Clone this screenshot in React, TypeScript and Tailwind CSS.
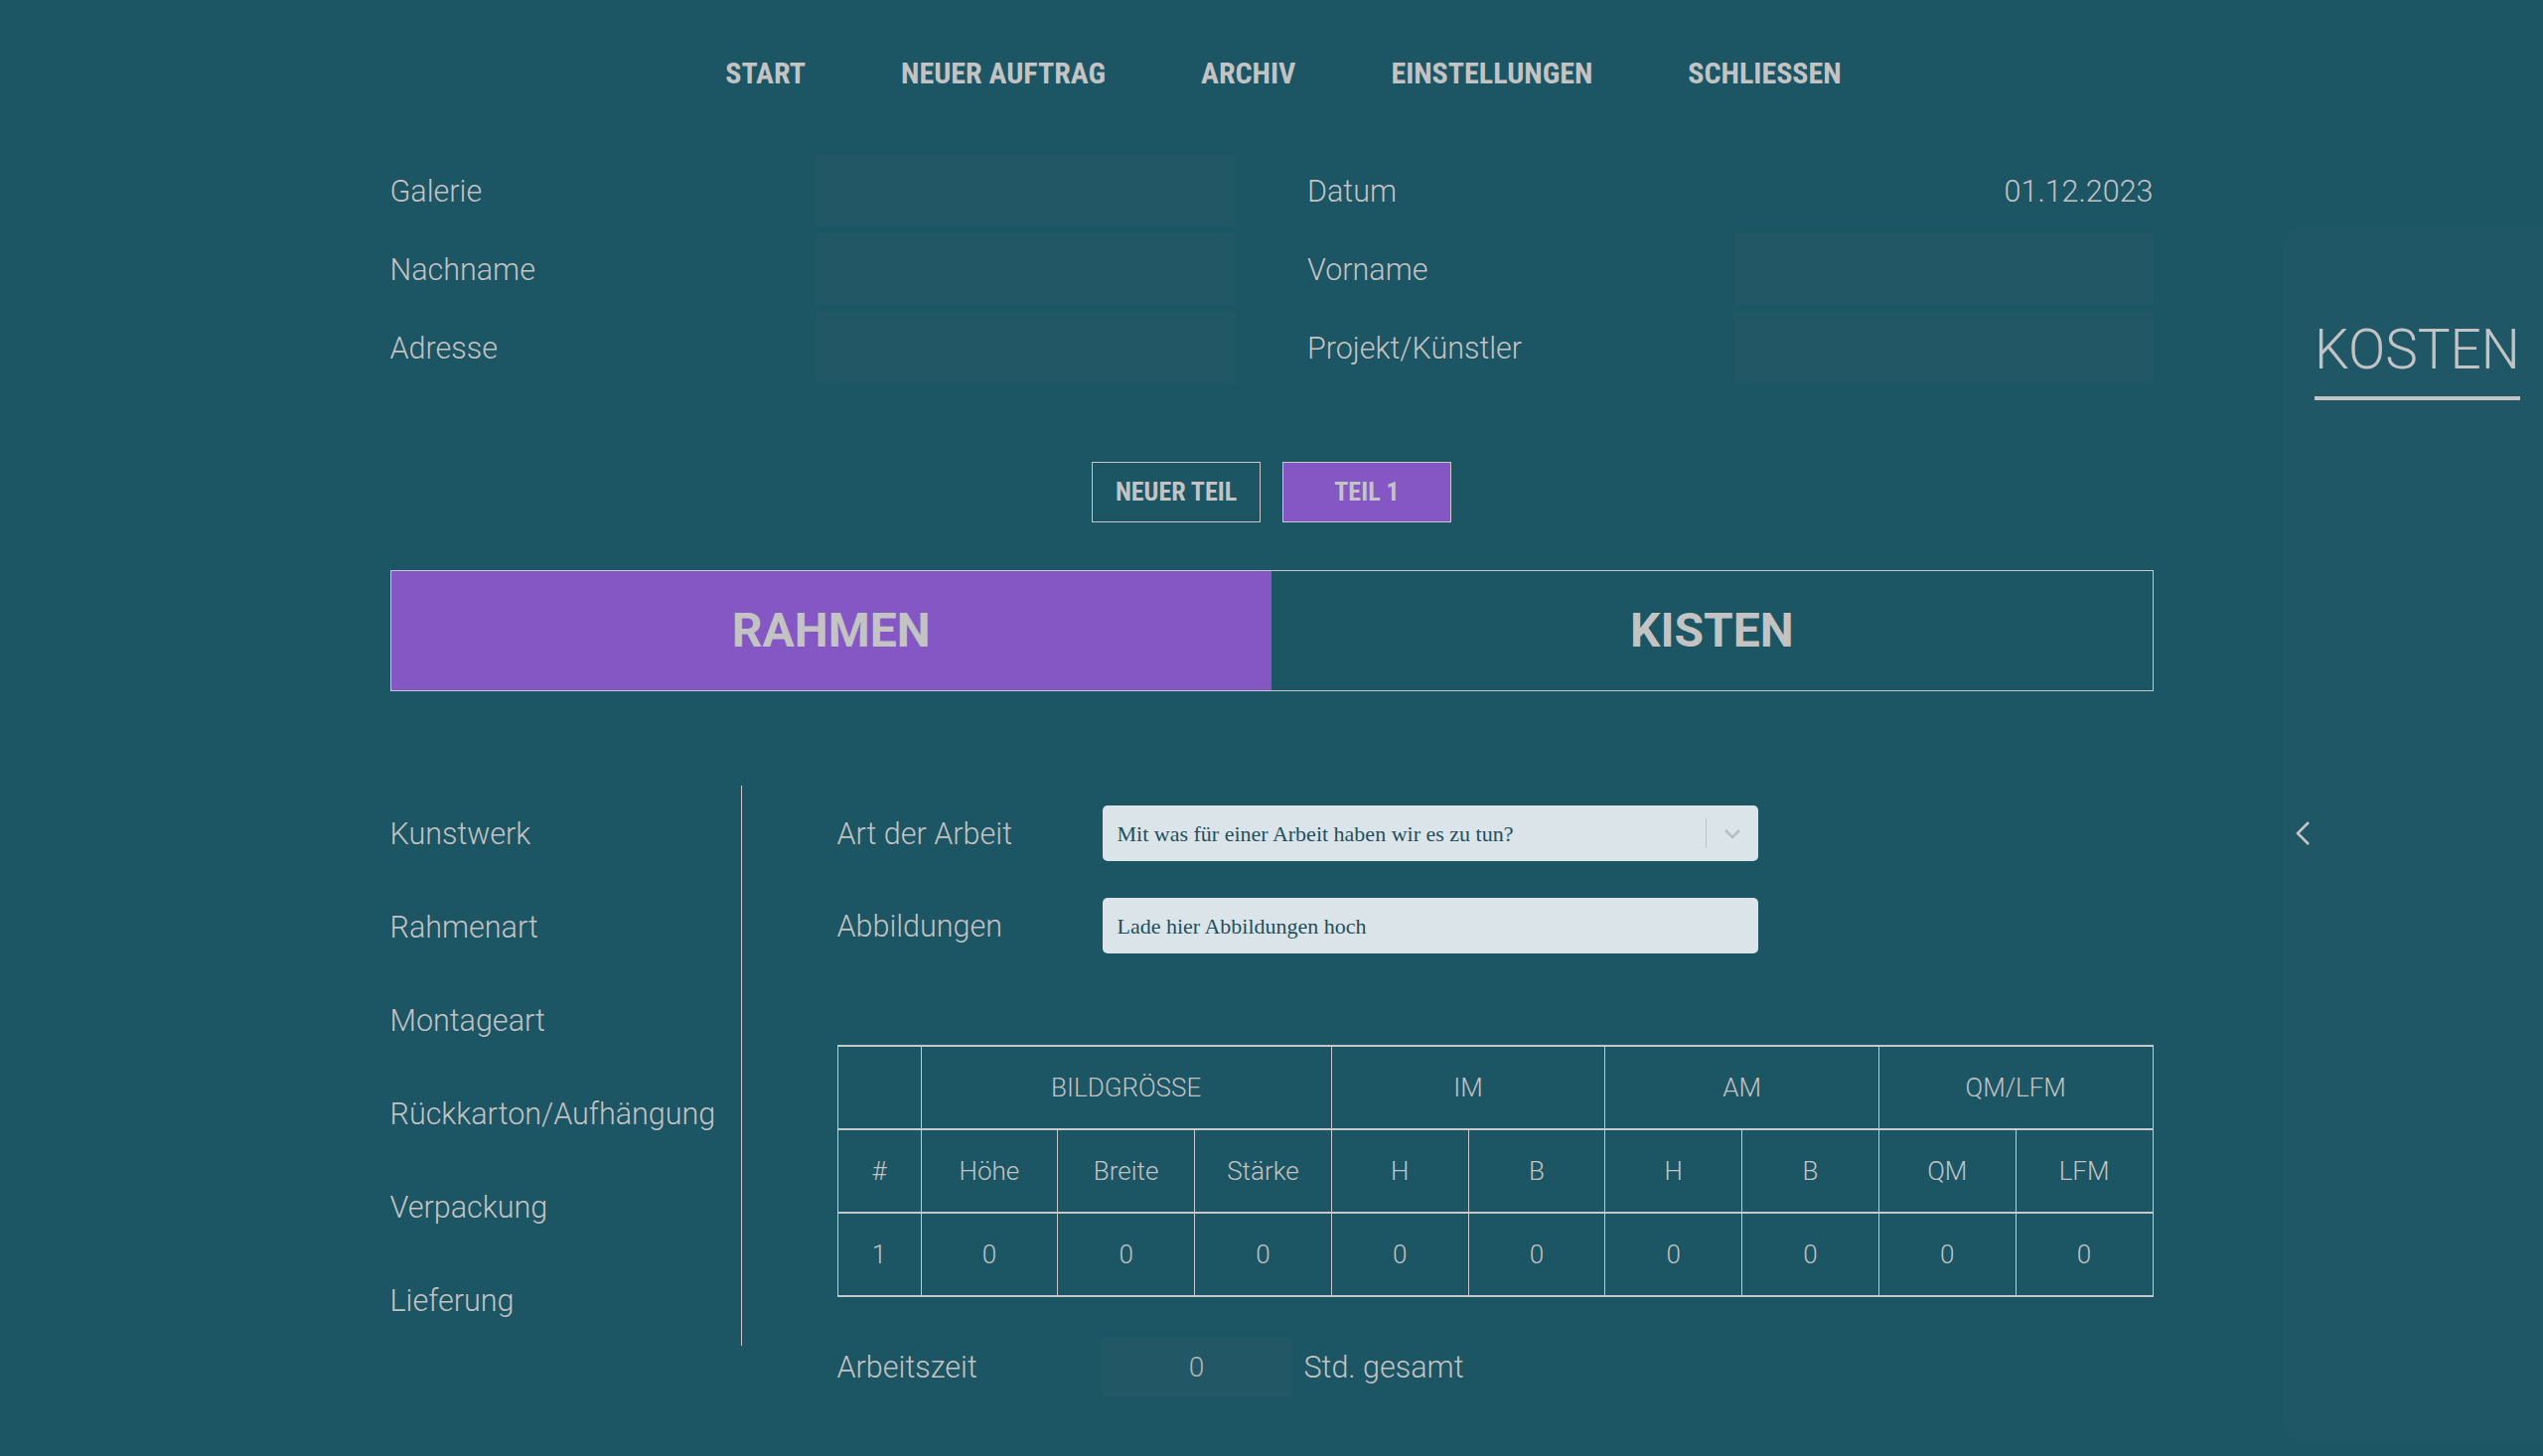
import React from "react";

const fields = [
  { label: "Galerie", box: true },
  { label: "Datum", value: "01.12.2023" },
  { label: "Nachname", box: true },
  { label: "Vorname", box: true },
  { label: "Adresse", box: true },
  { label: "Projekt/Künstler", box: true },
];

const menu = ["Kunstwerk", "Rahmenart", "Montageart", "Rückkarton/Aufhängung", "Verpackung", "Lieferung"];
const subCols = ["#", "Höhe", "Breite", "Stärke", "H", "B", "H", "B", "QM", "LFM"];

const cell = "border-x border-y-2 border-[#c8c8c8] text-center font-light text-[26px] h-[84px] p-0";

export default function App() {
  return (
    <div className="relative min-h-screen overflow-hidden bg-[#1c5564] text-[#c3c3c3] font-['Roboto',sans-serif]">
      <nav className="flex h-[146px] items-center justify-center gap-[96px] pl-[24px] text-[30px] font-bold font-stretch-condensed">
        <span>START</span>
        <span>NEUER AUFTRAG</span>
        <span>ARCHIV</span>
        <span>EINSTELLUNGEN</span>
        <span>SCHLIESSEN</span>
      </nav>

      <main className="mx-auto w-[1775px]">
        <div className="mt-[10px] grid grid-cols-2 gap-x-[72px] gap-y-[7px]">
          {fields.map((f) => (
            <div key={f.label} className="flex h-[72px] items-center justify-between text-[30.5px] font-light">
              <span className="pt-[2px]">{f.label}</span>
              {f.box ? <div className="h-[72px] w-[422px] bg-[#225866]" /> : <span className="pt-[2px]">{f.value}</span>}
            </div>
          ))}
        </div>

        <div className="mt-[79px] flex justify-center gap-[22px] text-[26px] font-bold font-stretch-condensed">
          <button className="h-[61px] w-[170px] border border-[#c8c8c8]">NEUER TEIL</button>
          <button className="h-[61px] w-[170px] border border-[#c8c8c8] bg-[#8557c4]">TEIL 1</button>
        </div>

        <div className="mt-[48px] flex h-[122px] border border-[#c8c8c8] text-[48px] font-bold">
          <div className="flex flex-1 items-center justify-center bg-[#8557c4]">RAHMEN</div>
          <div className="flex flex-1 items-center justify-center">KISTEN</div>
        </div>

        <div className="mt-[95px] flex items-start">
          <ul className="w-[354px] border-r border-[#c8c8c8] text-[30.5px] font-light">
            {menu.map((m) => (
              <li key={m} className="flex h-[94px] items-center pt-[3px]">{m}</li>
            ))}
          </ul>

          <div className="flex-1 pl-[96px] pt-[20px]">
            <div className="flex items-center">
              <span className="w-[267px] pt-[2px] text-[30.5px] font-light">Art der Arbeit</span>
              <div className="flex h-[56px] w-[660px] items-center rounded-[5px] bg-[#dbe5e9] pl-[15px] font-['Liberation_Serif',serif] text-[22px] text-[#1f4f5e]">
                <span className="flex-1">Mit was für einer Arbeit haben wir es zu tun?</span>
                <div className="h-[30px] w-px bg-[#b6c4ca]" />
                <svg className="mx-[17px] h-[12px] w-[18px]" viewBox="0 0 18 12" fill="none">
                  <path d="M2 3l7 7 7-7" stroke="#b3c1c7" strokeWidth="2.5" />
                </svg>
              </div>
            </div>
            <div className="mt-[37px] flex items-center">
              <span className="w-[267px] pt-[2px] text-[30.5px] font-light">Abbildungen</span>
              <div className="flex h-[56px] w-[660px] items-center rounded-[5px] bg-[#dbe5e9] pl-[15px] font-['Liberation_Serif',serif] text-[22px] text-[#1f4f5e]">
                Lade hier Abbildungen hoch
              </div>
            </div>

            <table className="mt-[92px] w-full table-fixed border-collapse">
              <colgroup>
                <col className="w-[84px]" />
              </colgroup>
              <tbody>
                <tr>
                  <td className={cell}></td>
                  <td className={cell} colSpan={3}>BILDGRÖSSE</td>
                  <td className={cell} colSpan={2}>IM</td>
                  <td className={cell} colSpan={2}>AM</td>
                  <td className={cell} colSpan={2}>QM/LFM</td>
                </tr>
                <tr>
                  {subCols.map((c, i) => (
                    <td key={i} className={cell}>{c}</td>
                  ))}
                </tr>
                <tr>
                  <td className={cell}>1</td>
                  {Array.from({ length: 9 }).map((_, i) => (
                    <td key={i} className={cell}>0</td>
                  ))}
                </tr>
              </tbody>
            </table>

            <div className="mt-[41px] flex items-center text-[30.5px] font-light">
              <span className="w-[266px]">Arbeitszeit</span>
              <div className="flex h-[60px] w-[192px] items-center justify-center bg-[#225866] text-[28px] text-[#b4b4b4]">0</div>
              <span className="ml-[12px]">Std. gesamt</span>
            </div>
          </div>
        </div>
      </main>

      <aside className="absolute right-0 top-[229px] h-[1222px] w-[261px] rounded-l-[18px] bg-[#205766]">
        <div className="inline-flex flex-col pl-[31px] pt-[96px]">
          <span className="text-[55px] font-light leading-none">KOSTEN</span>
          <div className="mt-[19px] h-[4px] w-[207px] bg-[#c3c3c3]" />
        </div>
        <svg className="absolute left-[11px] top-[597px] h-[26px] w-[16px]" viewBox="0 0 16 26" fill="none">
          <path d="M14 2L3 13l11 11" stroke="#c8c8c8" strokeWidth="2.5" />
        </svg>
      </aside>
    </div>
  );
}
